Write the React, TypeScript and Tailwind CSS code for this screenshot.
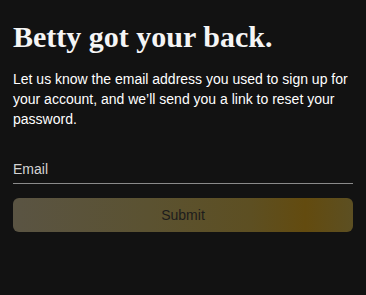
import React, { useState } from 'react';

export default function App() {
  const [email, setEmail] = useState('');

  return (
    <div className="min-h-[295px] w-full bg-[#121212] px-[13px] pt-[19px] font-['Liberation_Sans',Arial,sans-serif]">
      <h1 className="font-['Liberation_Serif','Times_New_Roman',serif] text-[30px] font-bold leading-[36px] text-[#f5f5f5]">
        Betty got your back.
      </h1>
      <p className="mt-[14px] text-[14px] leading-[20px] text-white">
        Let us know the email address you used to sign up for your account, and we’ll send you a link to reset your password.
      </p>

      <form className="mt-[27px] flex flex-col" onSubmit={(e) => e.preventDefault()}>
        <input
          type="email"
          value={email}
          onChange={(e) => setEmail(e.target.value)}
          placeholder="Email"
          className="h-[28px] border-b border-[#8a8a8a] bg-transparent pb-[1px] text-[14px] text-white outline-none placeholder:text-[#d4d4d4]"
        />
        <button
          type="submit"
          disabled={!email}
          className="mt-[14px] h-[34px] rounded-[6px] bg-[linear-gradient(90deg,#5a5443_0%,#5b5231_40%,#5d4f22_70%,#634b0f_86%,#5c4f22_100%)] text-[14px] text-[#1c1c1c]"
        >
          Submit
        </button>
      </form>
    </div>
  );
}
